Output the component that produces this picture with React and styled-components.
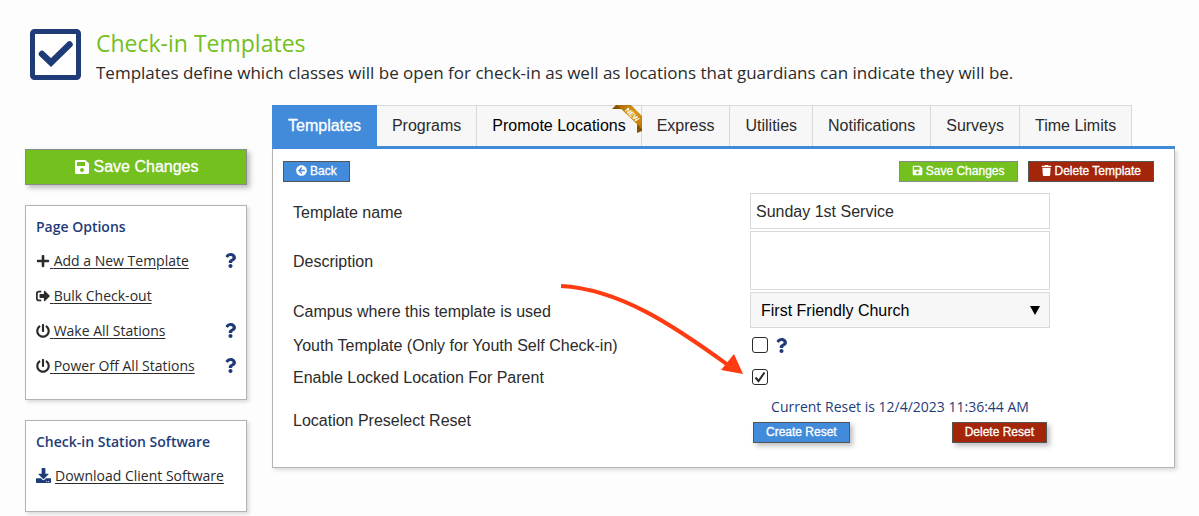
import React from 'react';
import styled, { createGlobalStyle, css } from 'styled-components';
import {
  FaArrowCircleLeft,
  FaDownload,
  FaPlus,
  FaPowerOff,
  FaQuestion,
  FaSave,
  FaSignOutAlt,
  FaTrash,
} from 'react-icons/fa';

const GlobalStyle = createGlobalStyle`
  * {
    box-sizing: border-box;
  }

  body {
    margin: 0;
    background-color: #fdfdfd;
    color: #2b2b2b;
    font-family: 'Liberation Sans', Arial, sans-serif;
    font-size: 16px;
  }
`;

const humanist = css`
  font-family: 'Open Sans', 'Noto Sans', sans-serif;
`;

const Page = styled.div`
  padding: 28px 24px 4px 25px;
`;

const Header = styled.header`
  display: flex;
  align-items: flex-start;
  gap: 14px;
  height: 77px;
  padding-left: 4px;
  ${humanist}
`;

const HeaderIcon = styled.svg`
  flex: none;
  width: 53px;
  height: 53px;
`;

const Title = styled.h1`
  margin: 0 0 2px;
  color: #73c01f;
  font-size: 23px;
  font-weight: 400;
  line-height: 30px;
`;

const Subtitle = styled.p`
  margin: 0;
  font-size: 17px;
  line-height: 26px;
`;

const Layout = styled.div`
  display: grid;
  grid-template-columns: 222px minmax(0, 1fr);
  align-items: start;
  gap: 25px;
`;

const Sidebar = styled.aside`
  display: flex;
  flex-direction: column;
  gap: 20px;
  padding-top: 44px;
`;

const Button = styled.button`
  display: inline-flex;
  align-items: center;
  justify-content: center;
  gap: ${({ $large }) => ($large ? '4px' : '3px')};
  height: ${({ $large }) => ($large ? '36px' : '21px')};
  padding: ${({ $large }) => ($large ? '0 12px' : '0 12px 2px')};
  border: 1px solid ${({ $tone }) => ($tone === 'green' ? '#8a8a8a' : '#555')};
  background-color: ${({ $tone }) =>
    ({ green: '#73c01f', blue: '#428bdb', red: '#a3260a' })[$tone]};
  box-shadow: ${({ $raised }) => ($raised ? '3px 3px 5px rgba(0, 0, 0, 0.25)' : 'none')};
  color: #fff;
  font-family: inherit;
  font-size: ${({ $large }) => ($large ? '16px' : '12px')};
  -webkit-text-stroke: 0.3px #fff;
  white-space: nowrap;
  cursor: pointer;

  svg {
    font-size: ${({ $large }) => ($large ? '16px' : '11px')};
  }
`;

const Box = styled.section`
  height: ${({ $tall }) => ($tall ? '195px' : '92px')};
  padding: 10px 10px 0;
  border: 1px solid #b3b3b3;
  background-color: #fff;
  box-shadow: 2px 2px 4px rgba(0, 0, 0, 0.15);
  ${humanist}
`;

const BoxTitle = styled.h2`
  margin: 0 0 5px;
  color: #1f3c78;
  font-size: 14px;
  font-weight: 600;
  line-height: 22px;
`;

const OptionRow = styled.div`
  display: flex;
  align-items: center;
  justify-content: space-between;
  height: 35px;
`;

const OptionLink = styled.a`
  color: #2b2b2b;
  font-size: 14px;
  text-decoration: underline;
  text-underline-offset: 2px;

  svg {
    vertical-align: -2px;
  }
`;

const Download = styled.div`
  display: flex;
  align-items: center;
  gap: 4px;

  > svg {
    color: #1f3c78;
    font-size: 15px;
  }
`;

const HelpButton = styled.button`
  display: inline-flex;
  margin-right: -2px;
  padding: 0;
  border: 0;
  background: none;
  color: #1f3c78;
  font-size: 15px;
  cursor: pointer;
`;

const Tabs = styled.nav`
  display: flex;
  border-bottom: 3px solid #428bdb;
`;

const Tab = styled.a`
  position: relative;
  height: 41px;
  padding: 0 15px;
  border-top: 1px solid #d9d9d9;
  border-right: 1px solid #d9d9d9;
  background-color: #f7f7f7;
  color: ${({ $dark }) => ($dark ? '#000' : '#2b2b2b')};
  line-height: 40px;
  text-decoration: none;
  white-space: nowrap;

  ${({ $active }) =>
    $active &&
    css`
      padding-left: 16px;
      border-color: #428bdb;
      background-color: #428bdb;
      color: #fff;
      -webkit-text-stroke: 0.3px #fff;
    `}
`;

const Ribbon = styled.svg`
  position: absolute;
  top: -1px;
  right: -1px;
  width: 30px;
  height: 28px;
`;

const Panel = styled.div`
  padding: 12px 20px 19px 10px;
  border: 1px solid #b3b3b3;
  border-top: 0;
  background-color: #fff;
  box-shadow: 2px 2px 4px rgba(0, 0, 0, 0.15);
`;

const Toolbar = styled.div`
  display: flex;
  gap: 10px;
  margin-bottom: 10px;
`;

const Spacer = styled.div`
  flex: 1;
`;

const Form = styled.form`
  padding-left: 10px;
`;

const Row = styled.div`
  display: grid;
  grid-template-columns: minmax(0, 457fr) minmax(300px, 404fr);
  align-items: center;
  min-height: ${({ $short }) => ($short ? '32px' : '38px')};
  padding: 1px 0;

  > label {
    padding-top: ${({ $short }) => ($short ? '1px' : '3px')};
  }
`;

const Field = styled.div`
  position: relative;
  display: flex;
  align-items: center;
  gap: 6px;
  width: 300px;
`;

const control = css`
  width: 100%;
  margin: 0;
  border: 1px solid #d9d9d9;
  border-radius: 0;
  color: #2b2b2b;
  font-family: inherit;
  font-size: 16px;
`;

const TextInput = styled.input`
  ${control}
  height: 36px;
  padding: 1px 5px 0;
`;

const TextArea = styled.textarea`
  ${control}
  display: block;
  height: 59px;
  padding: 5px;
  resize: none;
`;

const Select = styled.select`
  ${control}
  height: 36px;
  padding: 0 10px;
  appearance: none;
  background-color: #f7f7f7;
  color: #000;
`;

const Caret = styled.svg`
  position: absolute;
  right: 10px;
  width: 10px;
  height: 9px;
  pointer-events: none;
`;

const CheckWrap = styled.span`
  position: relative;
  display: inline-flex;
  margin-left: 2px;
`;

const Checkbox = styled.input`
  width: 16px;
  height: 16px;
  margin: 0;
  border: 1px solid #2b2b2b;
  border-radius: 3px;
  background-color: #fff;
  appearance: none;
`;

const Tick = styled.svg`
  position: absolute;
  inset: 0;
  width: 16px;
  height: 16px;
  pointer-events: none;
`;

const Pointer = styled.svg`
  position: absolute;
  right: calc(100% + 6px);
  bottom: 11px;
  width: 184px;
  height: 92px;
  pointer-events: none;
`;

const Reset = styled.div`
  width: 300px;
  padding: 3px 3px 4px;
`;

const ResetText = styled.p`
  margin: 0 0 5px;
  color: #1f3c78;
  font-size: 14px;
  line-height: 20px;
  text-align: center;
  ${humanist}
`;

const ResetActions = styled.div`
  display: flex;
  justify-content: space-between;
`;

const tabs = [
  { label: 'Templates', active: true },
  { label: 'Programs' },
  { label: 'Promote Locations', isNew: true },
  { label: 'Express' },
  { label: 'Utilities' },
  { label: 'Notifications' },
  { label: 'Surveys' },
  { label: 'Time Limits' },
];

const options = [
  { label: 'Add a New Template', icon: <FaPlus />, help: true },
  { label: 'Bulk Check-out', icon: <FaSignOutAlt /> },
  { label: 'Wake All Stations', icon: <FaPowerOff />, help: true },
  { label: 'Power Off All Stations', icon: <FaPowerOff />, help: true },
];

const Help = () => (
  <HelpButton type="button" aria-label="Help">
    <FaQuestion />
  </HelpButton>
);

const NewRibbon = () => (
  <Ribbon viewBox="0 0 30 28" aria-hidden="true">
    <defs>
      <linearGradient id="gold" x1="0" y1="0" x2="1" y2="1">
        <stop offset="0" stopColor="#a86500" />
        <stop offset="0.5" stopColor="#d99a1c" />
        <stop offset="1" stopColor="#b87408" />
      </linearGradient>
    </defs>
    <path d="M0 4 L4 0 H9 L11 4 Z M25 18 L30 22 V26 L25 28 Z" fill="#8a5200" />
    <path d="M5 0 H19 L30 11 V24 Z" fill="url(#gold)" />
    <text x="20" y="12" transform="rotate(44 20 10)" textAnchor="middle" fill="#fff" fontSize="7" fontWeight="700">
      NEW
    </text>
  </Ribbon>
);

const App = () => {
  const [locked, setLocked] = React.useState(true);

  return (
    <Page>
      <GlobalStyle />
      <Header>
        <HeaderIcon viewBox="0 0 53 53" aria-hidden="true">
          <rect x="3.5" y="3.5" width="46" height="46" rx="2" fill="#fff" stroke="#1f3c78" strokeWidth="5" />
          <path
            d="M13 26 L22 34.5 L40.5 16.5"
            fill="none"
            stroke="#1f3c78"
            strokeWidth="6.5"
            strokeLinecap="round"
          />
        </HeaderIcon>
        <div>
          <Title>Check-in Templates</Title>
          <Subtitle>
            Templates define which classes will be open for check-in as well as locations that guardians can indicate they will be.
          </Subtitle>
        </div>
      </Header>

      <Layout>
        <Sidebar>
          <Button $tone="green" $large $raised>
            <FaSave /> Save Changes
          </Button>
          <Box $tall>
            <BoxTitle>Page Options</BoxTitle>
            {options.map(({ label, icon, help }) => (
              <OptionRow key={label}>
                <OptionLink href="#">{icon} {label}</OptionLink>
                {help && <Help />}
              </OptionRow>
            ))}
          </Box>
          <Box>
            <BoxTitle>Check-in Station Software</BoxTitle>
            <OptionRow>
              <Download>
                <FaDownload />
                <OptionLink href="#">Download Client Software</OptionLink>
              </Download>
            </OptionRow>
          </Box>
        </Sidebar>

        <main>
          <Tabs>
            {tabs.map(({ label, active, isNew }) => (
              <Tab key={label} href="#" $active={active} $dark={isNew}>
                {label}
                {isNew && <NewRibbon />}
              </Tab>
            ))}
          </Tabs>

          <Panel>
            <Toolbar>
              <Button $tone="blue"><FaArrowCircleLeft /> Back</Button>
              <Spacer />
              <Button $tone="green"><FaSave /> Save Changes</Button>
              <Button $tone="red"><FaTrash /> Delete Template</Button>
            </Toolbar>

            <Form>
              <Row>
                <label htmlFor="name">Template name</label>
                <Field>
                  <TextInput id="name" type="text" defaultValue="Sunday 1st Service" />
                </Field>
              </Row>
              <Row>
                <label htmlFor="description">Description</label>
                <Field>
                  <TextArea id="description" />
                </Field>
              </Row>
              <Row>
                <label htmlFor="campus">Campus where this template is used</label>
                <Field>
                  <Select id="campus">
                    <option>First Friendly Church</option>
                  </Select>
                  <Caret viewBox="0 0 10 9" aria-hidden="true">
                    <path d="M0 0 H10 L5 9 Z" fill="#000" />
                  </Caret>
                </Field>
              </Row>
              <Row $short>
                <label htmlFor="youth">Youth Template (Only for Youth Self Check-in)</label>
                <Field>
                  <CheckWrap>
                    <Checkbox id="youth" type="checkbox" />
                  </CheckWrap>
                  <Help />
                </Field>
              </Row>
              <Row $short>
                <label htmlFor="locked">Enable Locked Location For Parent</label>
                <Field>
                  <CheckWrap>
                    <Checkbox
                      id="locked"
                      type="checkbox"
                      checked={locked}
                      onChange={(e) => setLocked(e.target.checked)}
                    />
                    {locked && (
                      <Tick viewBox="0 0 16 16" aria-hidden="true">
                        <path d="M3.5 8.5 L6.5 12 L12.5 3.5" fill="none" stroke="#2b2b2b" strokeWidth="2" />
                      </Tick>
                    )}
                  </CheckWrap>
                  <Pointer viewBox="0 0 184 92" aria-hidden="true">
                    <path d="M1 4 C59 7 113 43 168 83" fill="none" stroke="#ff3b12" strokeWidth="4" />
                    <path d="M183 92 L174 72 L161 88 Z" fill="#ff3b12" />
                  </Pointer>
                </Field>
              </Row>
              <Row>
                <span>Location Preselect Reset</span>
                <Reset>
                  <ResetText>Current Reset is 12/4/2023 11:36:44 AM</ResetText>
                  <ResetActions>
                    <Button type="button" $tone="blue" $raised>Create Reset</Button>
                    <Button type="button" $tone="red" $raised>Delete Reset</Button>
                  </ResetActions>
                </Reset>
              </Row>
            </Form>
          </Panel>
        </main>
      </Layout>
    </Page>
  );
};

export default App;
